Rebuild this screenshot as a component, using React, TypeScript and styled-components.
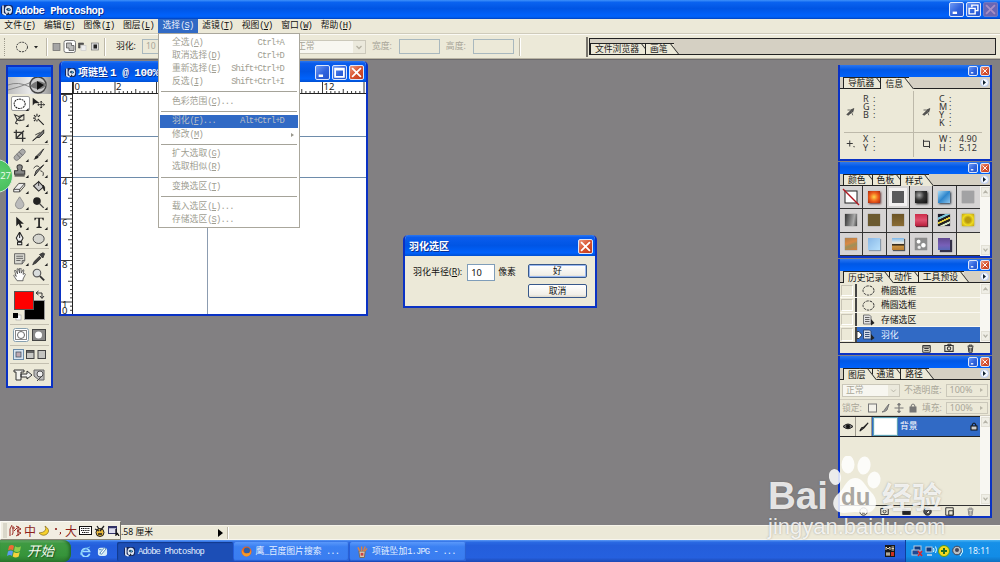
import React from 'react';
import styled, { createGlobalStyle, css } from 'styled-components';

const CJK = '"Noto Sans CJK SC"';
const beige = '#ece9d8';
const royal = '#0a32c4';

const Global = createGlobalStyle`
  *, *::before, *::after { box-sizing: border-box; }
  html, body { margin: 0; padding: 0; }
  body { overflow: hidden; }
  svg { display: block; flex: none; }
`;

/* ---------- text ---------- */

const Line = styled.span<{ $size?: number; $bold?: boolean; $color?: string }>`
  font-family: ${CJK}, sans-serif;
  font-size: ${p => p.$size ?? 8.8}px;
  font-weight: ${p => (p.$bold ? 700 : 400)};
  color: ${p => p.$color ?? 'inherit'};
  line-height: 1;
  white-space: pre;
`;
const Mono = styled.span<{ $open?: boolean }>`
  font-family: 'Liberation Mono', monospace;
  font-size: ${p => (p.$open ? 0.9 : 1)}em;
  letter-spacing: ${p => (p.$open ? -0.045 : -0.1)}em;
`;
const Tahoma = styled.span`
  font-family: 'Noto Sans', sans-serif;
  font-size: 0.98em;
`;

type LabelProps = { text: string; size?: number; bold?: boolean; color?: string; sans?: boolean };

/* Full-width runs use the CJK face, Latin runs a half-width one; "&X" underlines X. */
function Label({ text, size, bold, color, sans }: LabelProps) {
  const runs = text.match(/[\x20-\x7e]+|[^\x20-\x7e]+/g) ?? [];
  return (
    <Line $size={size} $bold={bold} $color={color}>
      {runs.map((run, i) => {
        if (!/^[\x20-\x7e]/.test(run)) return run;
        const parts = run.split(/(&[A-Z])/).map((s, j) => (s[0] === '&' ? <u key={j}>{s[1]}</u> : s));
        return sans ? <Tahoma key={i}>{parts}</Tahoma> : <Mono key={i} $open={bold}>{parts}</Mono>;
      })}
    </Line>
  );
}

/* ---------- shell ---------- */

const Screen = styled.div`
  position: relative;
  width: 1000px;
  height: 562px;
  display: flex;
  flex-direction: column;
  overflow: hidden;
  background: #828082;
  color: #111;
  font-family: 'Noto Sans', ${CJK}, sans-serif;
`;

const AppTitle = styled.header`
  height: 19px;
  flex: none;
  display: flex;
  align-items: center;
  padding: 0 2px 0 1px;
  gap: 2px;
  color: #fff;
  background: linear-gradient(#3f92fa 0, #0a63f0 12%, #0055e4 45%, #0061fb 80%, #0060f5 90%, #0040bd 100%);
  text-shadow: 1px 1px 0 #0a2f90;
`;
const Spacer = styled.div`
  flex: 1;
`;

const CaptionBtn = styled.span<{ $s: number; $kind?: 'close' | 'dim' }>`
  width: ${p => p.$s}px;
  height: ${p => p.$s}px;
  flex: none;
  display: flex;
  align-items: center;
  justify-content: center;
  border: 1px solid ${p => (p.$kind === 'dim' ? '#6a7ac8' : '#dbe6fb')};
  border-radius: 2px;
  background: ${p =>
    p.$kind === 'close'
      ? 'linear-gradient(135deg,#eb9a80,#d9532f 50%,#c03a1c)'
      : p.$kind === 'dim'
        ? '#6a66b4'
        : 'linear-gradient(135deg,#6f9af4,#2f62dc 55%,#2555cd)'};
`;

function Caption({ s, glyph, kind }: { s: number; glyph: 'min' | 'max' | 'restore' | 'x'; kind?: 'close' | 'dim' }) {
  const c = kind === 'dim' ? '#a890c4' : '#fff';
  return (
    <CaptionBtn $s={s} $kind={kind}>
      <svg width={s - 4} height={s - 4} viewBox="0 0 10 10" fill="none" stroke={c} strokeWidth="1.6">
        {glyph === 'min' && <path d="M1.5 8h4" strokeWidth="2.2" />}
        {glyph === 'max' && <path d="M1 1.5h8v7.5H1zM1 2.4h8" />}
        {glyph === 'restore' && <path d="M3.5 3V1h5.5v5H7M1 4h5.5v5H1z" strokeWidth="1.3" />}
        {glyph === 'x' && <path d="M1 1l8 8M9 1l-8 8" />}
      </svg>
    </CaptionBtn>
  );
}

function PsIcon({ s = 11 }: { s?: number }) {
  return (
    <svg width={s} height={s} viewBox="0 0 12 12">
      <rect x="0" y="1" width="12" height="10" rx="3" fill="#12245c" />
      <path d="M2 1.5v8l3 1.5" stroke="#e8f0fa" strokeWidth="1.6" fill="none" />
      <ellipse cx="7.5" cy="6" rx="3.6" ry="4.2" fill="#dfe9f4" />
      <path d="M5 5.5q3-3 5 .5q-2 2.5-5-.5" fill="#153255" />
      <circle cx="8" cy="5.5" r="1" fill="#5db6dd" />
      <path d="M6 11l1-3 1.5 2" fill="#131a2c" />
    </svg>
  );
}

const MenuBar = styled.nav`
  height: 15px;
  flex: none;
  display: flex;
  background: ${beige};
  border-bottom: 1px solid #cfcbbb;
`;
const MenuTitle = styled.div<{ $open?: boolean }>`
  width: 39.55px;
  height: 14px;
  display: flex;
  align-items: center;
  justify-content: center;
  ${p => p.$open && css`background: #316ac5; color: #e9f0fb;`}
`;

const OptionsBar = styled.div`
  height: 25px;
  flex: none;
  display: flex;
  align-items: center;
  background: ${beige};
  border-top: 1px solid #fbfaf4;
  border-bottom: 1px solid #b9b4a4;
  color: #222;
`;
const Grip = styled.i`
  width: 2px;
  height: 18px;
  margin: 0 10px 0 4px;
  border-left: 1px dotted #9d9a8c;
`;
const VRule = styled.i<{ $h?: number }>`
  width: 2px;
  height: ${p => p.$h ?? 18}px;
  border-left: 1px solid #bdb8a8;
  border-right: 1px solid #fff;
`;
const Field = styled.span<{ $w: number; $h?: number; $border?: string; $bg?: string }>`
  width: ${p => p.$w}px;
  height: ${p => p.$h ?? 15}px;
  flex: none;
  display: flex;
  align-items: center;
  padding-left: 3px;
  border: 1px solid ${p => p.$border ?? '#a9b8be'};
  background: ${p => p.$bg ?? beige};
`;
const OptGroup = styled.div<{ $l?: number; $gap?: number }>`
  display: flex;
  align-items: center;
  margin-left: ${p => p.$l ?? 0}px;
  gap: ${p => p.$gap ?? 0}px;
`;
const PaletteWell = styled.div`
  width: 407px;
  height: 17px;
  display: flex;
  align-items: flex-end;
  border: 1px solid #222;
  background: #d5d0c3;
  margin-right: 4px;
`;
const WellEdge = styled.i`
  width: 2px;
  height: 20px;
  background: #77746c;
  margin-right: 1px;
`;

/* ---------- tabs ---------- */

const TabStrip = styled.div`
  display: flex;
  align-items: flex-end;
  height: 12px;
  flex: none;
  padding-left: 3px;
  background: #d5d0c3;
  border-bottom: 1px solid #222;
`;
const TabBox = styled.div<{ $active?: boolean }>`
  position: relative;
  height: 11px;
  display: flex;
  align-items: center;
  padding: 1px 6px 0 4px;
  border-left: 1px solid #222;
  border-top: 1px solid #222;
  background: ${beige};
  z-index: ${p => (p.$active ? 3 : 1)};
  ${p => p.$active && css`margin-bottom: -1px; height: 12px;`}
  &::after {
    content: '';
    position: absolute;
    right: -5px;
    top: -1px;
    bottom: 0;
    width: 8px;
    background: ${beige};
    border-top: 1px solid #222;
    border-right: 1px solid #222;
    transform: skewX(38deg);
    transform-origin: bottom;
  }
  & > span {
    position: relative;
    z-index: 2;
  }
`;
const PanelMenu = styled.span`
  width: 9px;
  height: 9px;
  margin: 0 1px 1px 0;
  border-radius: 50%;
  background: #f3f7ff;
  border: 1px solid #b7c8ee;
  display: flex;
  align-items: center;
  justify-content: center;
`;
function Tabs({ names, active }: { names: string[]; active: number }) {
  return (
    <TabStrip>
      {names.map((n, i) => (
        <TabBox key={n} $active={i === active}>
          <Label text={n} />
        </TabBox>
      ))}
      <Spacer />
      <PanelMenu>
        <svg width="3" height="5" viewBox="0 0 3 5"><path d="M0 0l3 2.5L0 5z" fill="#123" /></svg>
      </PanelMenu>
    </TabStrip>
  );
}

/* ---------- workspace ---------- */

const Workspace = styled.main`
  position: relative;
  flex: 1;
  border-top: 1px solid #6b696b;
  background: #828082;
`;

const Toolbox = styled.aside`
  position: absolute;
  left: 6px;
  top: 5px;
  width: 47px;
  height: 323px;
  display: flex;
  flex-direction: column;
  border: 2px solid ${royal};
  background: ${beige};
`;
const ToolTitle = styled.div`
  height: 10px;
  flex: none;
  background: linear-gradient(#1a6bf2, #0058e8 50%, #0061fa);
`;
const ToolGroup = styled.div<{ $h: number }>`
  height: ${p => p.$h}px;
  flex: none;
  margin: 0 2px;
  padding: 2px 0 0 1px;
  display: grid;
  grid-template-columns: 19px 19px;
  grid-auto-rows: 16px;
  align-content: start;
  border-bottom: 1px solid #c3bfb0;
`;
const ToolRow = styled.div<{ $h: number; $gap?: number }>`
  height: ${p => p.$h}px;
  flex: none;
  margin: 0 2px;
  display: flex;
  align-items: center;
  justify-content: center;
  gap: ${p => p.$gap ?? 3}px;
  border-bottom: 1px solid #c3bfb0;
  &:last-child { border-bottom: 0; }
`;
const ToolCell = styled.div<{ $on?: boolean }>`
  display: flex;
  align-items: center;
  justify-content: center;
  ${p => p.$on && css`background: #fff; border: 1px solid #9a9a9a; border-radius: 2px; margin: 0 0 1px;`}
`;

const toolArt: Record<string, React.ReactNode> = {
  marquee: <ellipse cx="8" cy="8" rx="6.500" ry="5.500" fill="none" stroke="#222" strokeWidth="1.200" strokeDasharray="2.200 .8" />,
  move: <><path d="M1 1v9l2.500-2.500L9 7z" fill="#222" /><path d="M11 5v8M7 9h8M9.800 6.400L11 5l1.200 1.400M9.800 11.600L11 13l1.200-1.400M8.300 7.800L7 9l1.300 1.200M13.700 7.800L15 9l-1.300 1.200" stroke="#222" fill="none" /></>,
  lasso: <path d="M3 12l2-4-3-6 5 2 6-2v6L8 9 4 8M3 12l3 1M7 4l2 5M13 2l-8 6" stroke="#333" fill="none" strokeWidth="1.200" />,
  wand: <path d="M7 7l7 7M6 1v3M1.500 6h3M2.500 2.500l2 2M9.500 2.500l-2 2M2.500 9.500l2-2M6 8v2" stroke="#222" strokeWidth="1.300" fill="none" />,
  crop: <path d="M4 1v10h11M1 4h10.500v11M4 11L13 2" stroke="#333" strokeWidth="1.600" fill="none" />,
  slice: <path d="M1 14l8-8 5-5v4l-5 5-3 0zM4 7l6-3" stroke="#222" fill="#777" strokeWidth="1" />,
  heal: <g transform="rotate(-45 8 8)"><rect x="0" y="5" width="16" height="6" rx="3" fill="#aaa" stroke="#777" /><path d="M6 5v6M10 5v6" stroke="#666" /></g>,
  brush: <><path d="M14 1L7 8l2 1z" stroke="#222" fill="#999" /><path d="M1 14q2 0 3-4 3-3 4 0 0 3-7 4" fill="#222" /></>,
  stamp: <path d="M6 7q-3-6 2-6t2 6l1 1h3v4H2V8h3zM2 14h12" stroke="#333" fill="#888" strokeWidth="1.200" />,
  history: <><path d="M14 1L8 8l-5 6 2-6z" stroke="#222" fill="#888" /><path d="M2 5q4-5 7-1M10 8q5 1 3 6" stroke="#222" fill="none" /></>,
  eraser: <path d="M1 11l6-7h7l-6 7zM1 11v3h7v-3M8 14l6-7V4" stroke="#333" fill="#eee" />,
  bucket: <><path d="M2 7l6-5 6 6-6 5z" fill="#ccc" stroke="#222" strokeWidth="1.200" /><path d="M8 1v6M13 6q3 2 2 7l-2-4z" stroke="#222" fill="#222" /></>,
  drop: <path d="M8 1q5 7 5 9a5 5 0 0 1-10 0q0-2 5-9" fill="#bbb" stroke="#888" />,
  dodge: <><circle cx="6" cy="6" r="4.500" fill="#222" /><path d="M9 9l5 5" stroke="#444" strokeWidth="1.600" /></>,
  select: <path d="M4 1v11l3-3 2 5 2-1-2-4h4z" fill="#222" />,
  type: <path d="M3 2h11v3h-1l-1-2H9.500v9.500l2 .5v1h-6v-1l2-.5V3H5L4 5H3z" fill="#222" />,
  pen: <path d="M8 0l4 7-2 4H6L4 7zM8 1v6M5.500 12h5v3h-5z" stroke="#222" fill="#eee" strokeWidth="1.200" />,
  ellipse: <ellipse cx="8" cy="8" rx="6.500" ry="5.500" fill="#d5d5cf" stroke="#333" />,
  note: <path d="M2 2h12v8l-3 4H2zM11 14v-4h3M4 5h8M4 7.500h8M4 10h5" fill="#d9d9d2" stroke="#555" />,
  dropper: <path d="M1 15l2-4 6-6 2 2-6 6zM9 3l4 4 2-5-2-1z" fill="#444" stroke="#333" />,
  hand: <path d="M5 15l-4-6 1-1 2 2-2-7h1.500L5.500 7 5 1h1.500L8 6V0h1.500L10 6l2-4 1 .5-1 5 2-1 .8 1L12 13v2z" fill="#fff" stroke="#444" strokeWidth=".9" />,
  zoom: <><circle cx="6" cy="6" r="4.500" fill="#d8dcdc" stroke="#555" strokeWidth="1.300" /><path d="M9.500 9.500l5 5" stroke="#333" strokeWidth="2.200" /></>,
};
function Tool({ name, on, flyout = true }: { name: string; on?: boolean; flyout?: boolean }) {
  return (
    <ToolCell $on={on}>
      <svg width="17" height="14" viewBox="-1 0 20 16.500">
        {toolArt[name]}
        {flyout && <path d="M18.500 13v3.500H15z" fill="#222" />}
      </svg>
    </ToolCell>
  );
}

const DocWindow = styled.section`
  position: absolute;
  left: 59px;
  top: 1px;
  width: 309px;
  height: 255px;
  display: flex;
  flex-direction: column;
  border: 2px solid ${royal};
  border-top: 0;
  border-radius: 5px 5px 0 0;
  overflow: hidden;
  background: #fff;
`;
const WinTitle = styled.div<{ $h: number }>`
  height: ${p => p.$h}px;
  flex: none;
  display: flex;
  align-items: center;
  gap: 2px;
  padding: 1px 2px 0 4px;
  color: #fff;
  text-shadow: 1px 1px 0 #0a2f90;
  background: linear-gradient(#2a76f0 0, #0a5cec 12%, #0055e5 50%, #0062fc 85%, #004fd0 100%);
`;
const DocBody = styled.div`
  flex: 1;
  display: grid;
  grid-template-columns: 12px 1fr;
  grid-template-rows: 12px 1fr;
`;
const RulerCorner = styled.div`
  border-right: 1px solid #222;
  border-bottom: 1px solid #222;
`;
const DocCanvas = styled.div`
  background:
    linear-gradient(#6e8cab, #6e8cab) 0 42px / 100% 1px no-repeat,
    linear-gradient(#6e8cab, #6e8cab) 0 83px / 100% 1px no-repeat,
    linear-gradient(#8c9cb0, #8c9cb0) 134px 0 / 1px 100% no-repeat, #fff;
`;

const UNIT = 20.75;
function HRuler() {
  return (
    <svg width="293" height="12" fontFamily="Noto Sans" fontSize="9.500" fill="#222">
      {Array.from({ length: 72 }, (_, i) => {
        const x = (i * UNIT) / 5;
        return <path key={i} d={`M${x + 0.5} 12V${i % 10 === 0 ? 0 : i % 5 === 0 ? 7 : 9}`} stroke="#222" strokeWidth=".9" />;
      })}
      {[0, 2, 12].map(n => <text key={n} x={n * UNIT + 1.5} y="7.500">{n}</text>)}
      <path d="M0 11.500h293" stroke="#222" />
    </svg>
  );
}
function VRuler() {
  return (
    <svg width="12" height="220" fontFamily="Noto Sans" fontSize="9.500" fill="#222">
      {Array.from({ length: 54 }, (_, i) => {
        const y = (i * UNIT) / 5;
        return <path key={i} d={`M12 ${y + 0.5}H${i % 10 === 0 ? 0 : i % 5 === 0 ? 7 : 9}`} stroke="#222" strokeWidth=".9" />;
      })}
      {[0, 2, 4, 6, 8].map(n => <text key={n} x="1" y={n * UNIT + 7.5}>{n}</text>)}
      <text x="1" y="213.500">1</text>
      <text x="1" y="220">0</text>
      <path d="M11.500 0v220" stroke="#222" />
    </svg>
  );
}

/* ---------- drop-down ---------- */

const Dropdown = styled.div`
  position: absolute;
  left: 158px;
  top: 33px;
  width: 142px;
  height: 195px;
  z-index: 20;
  padding: 2px 1px;
  border: 1px solid #aaa79c;
  background: #fff;
  color: #a09e92;
`;
const MenuItem = styled.div<{ $hot?: boolean }>`
  height: 13.15px;
  display: flex;
  align-items: center;
  justify-content: space-between;
  padding: 0 14px 0 12px;
  ${p => p.$hot && css`background: #316ac5; color: #b9bfc6;`}
`;
const MenuRule = styled.div`
  height: 1px;
  margin: 2.8px 1px 2.75px;
  background: #a5a399;
`;
const SubArrow = styled.span`
  margin-right: -10px;
  border-left: 3px solid #99978c;
  border-top: 2.5px solid transparent;
  border-bottom: 2.5px solid transparent;
`;
const selectMenu: Array<[string, string?] | null> = [
  ['全选(&A)', 'Ctrl+A'],
  ['取消选择(&D)', 'Ctrl+D'],
  ['重新选择(&E)', 'Shift+Ctrl+D'],
  ['反选(&I)', 'Shift+Ctrl+I'],
  null,
  ['色彩范围(&C)...'],
  null,
  ['羽化(&F)...', 'Alt+Ctrl+D'],
  ['修改(&M)', '>'],
  null,
  ['扩大选取(&G)'],
  ['选取相似(&R)'],
  null,
  ['变换选区(&T)'],
  null,
  ['载入选区(&L)...'],
  ['存储选区(&S)...'],
];

/* ---------- dialog ---------- */

const Dialog = styled.section`
  position: absolute;
  left: 403px;
  top: 175px;
  width: 194px;
  height: 73px;
  display: flex;
  flex-direction: column;
  border: 2px solid ${royal};
  border-top: 0;
  border-radius: 5px 5px 0 0;
  overflow: hidden;
  background: ${beige};
`;
const DialogBody = styled.div`
  flex: 1;
  display: flex;
  align-items: flex-start;
  padding: 8px 8px 0;
`;
const DialogText = styled.div`
  height: 16px;
  display: flex;
  align-items: center;
`;
const ButtonCol = styled.div`
  display: flex;
  flex-direction: column;
  gap: 6px;
  margin-left: auto;
`;
const XpButton = styled.div<{ $default?: boolean }>`
  width: 59px;
  height: 14px;
  display: flex;
  align-items: center;
  justify-content: center;
  border: 1px solid #37588a;
  border-radius: 2px;
  background: linear-gradient(#fff, #f1efe8 80%, #dcd8cc);
  ${p => p.$default && css`box-shadow: inset 0 0 0 1px #9bb9f0;`}
`;

/* ---------- panels ---------- */

const PanelDock = styled.div`
  position: absolute;
  left: 838px;
  top: 5px;
  width: 154px;
  display: flex;
  flex-direction: column;
  gap: 1px;
`;
const Panel = styled.section<{ $h: number }>`
  height: ${p => p.$h}px;
  display: flex;
  flex-direction: column;
  border: 2px solid ${royal};
  border-top: 0;
  background: ${beige};
  overflow: hidden;
`;
const PanelTitle = styled.div`
  height: 12px;
  flex: none;
  display: flex;
  align-items: center;
  justify-content: flex-end;
  gap: 2px;
  background: linear-gradient(#2a76f0, #0058e6 40%, #0062fb);
`;
const InfoGrid = styled.div`
  flex: 1;
  display: grid;
  grid-template-columns: 70px 68px;
  grid-template-rows: 42px 24px;
  padding: 2px 0 0 4px;
`;
const InfoCell = styled.div<{ $right?: boolean; $top?: boolean }>`
  display: flex;
  align-items: center;
  gap: 8px;
  padding-left: ${p => (p.$right ? 8 : 2)}px;
  ${p => !p.$right && css`border-right: 1px solid #bdb9aa;`}
  ${p => (p.$top ? css`border-bottom: 1px solid #bdb9aa;` : css`padding-bottom: 3px;`)}
`;
const Channels = styled.div<{ $pad?: boolean }>`
  display: grid;
  grid-template-columns: 10px 10px auto;
  align-self: ${p => (p.$pad ? 'flex-start' : 'center')};
  padding-top: ${p => (p.$pad ? 4 : 0)}px;
  font: 9px/8.1px 'Noto Sans', sans-serif;
  color: #333;
`;
const StyleArea = styled.div`
  flex: 1;
  display: flex;
`;
const StyleGrid = styled.div`
  width: 140px;
  display: grid;
  grid-template-columns: repeat(6, 1fr);
  grid-template-rows: repeat(3, 1fr);
`;
const StyleCell = styled.div<{ $empty?: boolean }>`
  display: flex;
  align-items: center;
  justify-content: center;
  border-right: 1px solid #333;
  border-bottom: 1px solid #333;
  background: ${p => (p.$empty ? beige : '#d6d4d4')};
  &:nth-child(6n) { border-right: 0; }
`;
const Swatch = styled.i<{ $bg: string; $ring?: string }>`
  width: 12px;
  height: 12px;
  background: ${p => p.$bg};
  box-shadow: ${p => p.$ring ?? '0 0 1px #666'};
`;
const swatches: Array<[string, string?]> = [
  ['#fff'],
  ['radial-gradient(#ffd84a,#f0601c 50%,#a8260c)', '1px 1px 2px #633'],
  ['#5a5a5c', '0 0 0 3px #f2f0f0'],
  ['radial-gradient(circle at 35% 35%,#aaa,#333 45%,#111)', '1px 1px 2px #222'],
  ['linear-gradient(135deg,#a8dcf8,#2f86cc 50%,#8cc4ec)', '1px 1px 2px #234'],
  ['#a2a2a4'],
  ['linear-gradient(100deg,#333,#aaa 70%,#444)'],
  ['#6b5a30'],
  ['linear-gradient(#6b5426,#8a6c34)'],
  ['linear-gradient(#cc2c48,#e05070 50%,#b8203c)', '1px 1px 1px #623'],
  ['linear-gradient(155deg,#1a1a2c 18%,#7cc4d8 22% 32%,#222 36% 46%,#e8d040 48% 56%,#222 60% 70%,#d8e8c8 74% 82%,#223 86%)'],
  ['radial-gradient(#b89a10 30%,#f0dc20 60%,#c0a010)', '0 0 2px #a90'],
  ['linear-gradient(160deg,#b08048,#d88844 40%,#a09058 60%,#d87c3c)'],
  ['linear-gradient(135deg,#88b8e8,#b8e0fc)', '1px 1px 1px #89a'],
  ['linear-gradient(#7cb8ec,#f4f0e4 45%,#241c10 55%,#c89040 70%,#b87c30)', '1px 1px 1px #555'],
  ['radial-gradient(circle at 30% 30%,#fff 12%,transparent 20%),radial-gradient(circle at 70% 60%,#fff 15%,transparent 25%),radial-gradient(circle at 35% 78%,#eee 8%,transparent 18%),#8c8c8c'],
  ['linear-gradient(#604890,#7860b8 60%,#5868b8)', '2px 2px 1px #333048'],
];

const ScrollRail = styled.div`
  width: 10px;
  display: flex;
  flex-direction: column;
  justify-content: space-between;
  align-items: center;
  padding: 1px 0;
  background: #f8f7f2;
`;
const ScrollBtn = styled.span<{ $down?: boolean }>`
  width: 9px;
  height: 10px;
  display: flex;
  align-items: center;
  justify-content: center;
  background: #efeee6;
  border: 1px solid #e2e0d6;
  transform: ${p => (p.$down ? 'rotate(180deg)' : 'none')};
`;
function Scroller() {
  const chevron = <svg width="5" height="4" viewBox="0 0 5 4"><path d="M.5 3.300L2.500 1l2 2.300" stroke="#b5b3a8" fill="none" strokeWidth="1.200" /></svg>;
  return (
    <ScrollRail>
      <ScrollBtn>{chevron}</ScrollBtn>
      <ScrollBtn $down>{chevron}</ScrollBtn>
    </ScrollRail>
  );
}

const HistoryArea = styled.div`
  flex: 1;
  display: flex;
  min-height: 0;
`;
const HistoryList = styled.div`
  width: 140px;
  display: flex;
  flex-direction: column;
  justify-content: flex-end;
`;
const HistoryRow = styled.div<{ $on?: boolean }>`
  height: 14.6px;
  flex: none;
  display: flex;
  align-items: center;
  border-bottom: 1px solid #faf8f0;
  ${p => p.$on && css`border-bottom: 0; color: #e8f0ff;`}
`;
const HistoryMark = styled.span`
  width: 17px;
  height: 100%;
  padding: 1px 2px 1px 1px;
  border-right: 2px solid #444;
  background: ${beige};
  &::before {
    content: '';
    display: block;
    height: 100%;
    border: 1px solid #c9c5b6;
    border-right-color: #fff;
    border-bottom-color: #fff;
  }
`;
const HistoryBody = styled.span<{ $on?: boolean }>`
  flex: 1;
  height: 100%;
  display: flex;
  align-items: center;
  gap: 6px;
  padding-top: 1px;
  padding-left: ${p => (p.$on ? 0 : 5)}px;
  ${p => p.$on && css`background: #316ac5; gap: 0; & > span { margin-left: 6px; }`}
`;
const PanelFooter = styled.div`
  height: 11px;
  flex: none;
  display: flex;
  align-items: center;
  justify-content: flex-end;
  gap: 12.5px;
  border-top: 1px solid #333;
  padding-right: 15px;
`;
const Glyph = ({ d, s = 9, fill = 'none', c = '#333' }: { d: string; s?: number; fill?: string; c?: string }) => (
  <svg width={s} height={s} viewBox="0 0 12 12" fill={fill} stroke={c} strokeWidth="1.300"><path d={d} /></svg>
);
const TRASH = 'M2 3h8M4 3V1.500h4V3M3 4l.8 7h4.400L9 4M5 5v5M7 5v5';

function StateIcon({ on }: { on?: boolean }) {
  return (
    <svg width="13" height="12" viewBox="0 0 13 12">
      <path d="M1.500 1h6l1.500 1.500V10H1.500z" fill={on ? '#d5dcea' : '#e2e2e2'} stroke={on ? '#26416f' : '#666'} strokeWidth=".9" />
      <path d="M3 3.500h4.500M3 5.500h4.500M3 7.500h4.500" stroke={on ? '#26416f' : '#555'} strokeWidth=".9" />
      <path d="M9 5v6.500l3.500-2.500z" fill="#222" />
    </svg>
  );
}

const LayerOpts = styled.div<{ $h: number }>`
  height: ${p => p.$h}px;
  flex: none;
  display: flex;
  align-items: center;
  gap: 4px;
  padding: 1px 2px 0;
  color: #a9a698;
  border-bottom: 1px solid #d0ccbe;
`;
const LayerRow = styled.div`
  height: 21px;
  display: flex;
  align-items: stretch;
  border-top: 1px solid #222;
  border-bottom: 1px solid #222;
`;
const LayerFlag = styled.span`
  width: 16px;
  display: flex;
  align-items: center;
  justify-content: center;
  border-right: 1px solid #9d998c;
`;
const LayerName = styled.div`
  flex: 1;
  display: flex;
  align-items: center;
  gap: 2px;
  padding-right: 2px;
  background: #316ac5;
  color: #fff;
`;
const Thumb = styled.i`
  width: 25px;
  height: 19px;
  background: #fff;
  border: 1px solid #5da0b4;
  outline: 1px solid #e5f2f5;
  outline-offset: -2px;
  margin-left: 1px;
`;
const LayerArea = styled.div`
  flex: 1;
  display: flex;
`;
const LayerList = styled.div`
  width: 140px;
`;
const FieldArrow = styled.i`
  margin: 0 4px 0 auto;
  border-left: 3px solid #b9b6a8;
  border-top: 2.5px solid transparent;
  border-bottom: 2.5px solid transparent;
`;

/* ---------- status + taskbar ---------- */

const StatusBar = styled.footer`
  height: 15px;
  flex: none;
  display: flex;
  align-items: center;
  padding-left: 121px;
  background: ${beige};
  border-top: 1px solid #f7f4ea;
  border-bottom: 1px solid #f7f5ee;
`;
const ImeBar = styled.div`
  position: absolute;
  left: 0;
  top: 521px;
  width: 121px;
  height: 19px;
  z-index: 5;
  display: flex;
  align-items: center;
  gap: 2px;
  padding-left: 2px;
  background: #f1eee2;
  border: 1px solid #fbfaf5;
  border-right: 1px solid #77746c;
  border-bottom-color: #8a8678;
`;
const ImeMark = styled.span`
  font: 12px/1 ${CJK}, sans-serif;
  color: #8d1f1a;
`;
const TaskBar = styled.div`
  height: 22px;
  flex: none;
  display: flex;
  align-items: stretch;
  background: linear-gradient(#5c9bf6 0, #2a69e2 10%, #245edb 25%, #2560df 80%, #1c48b4 100%);
`;
const StartButton = styled.div`
  width: 71px;
  display: flex;
  align-items: center;
  gap: 5px;
  padding-left: 7px;
  border-radius: 0 8px 8px 0;
  background: linear-gradient(#74b878 0, #3f9a42 15%, #36943a 70%, #2b7a2e 100%);
  box-shadow: inset -2px 0 3px #256a2a;
`;
const StartText = styled.span`
  font: italic 400 13.5px/1 ${CJK}, sans-serif;
  color: #f3fbef;
  text-shadow: 1px 1px 1px #1b4f20;
`;
const QuickLaunch = styled.div`
  width: 46px;
  display: flex;
  align-items: center;
  gap: 6px;
  padding-left: 9px;
`;
const TaskButton = styled.div<{ $pressed?: boolean }>`
  width: 115.5px;
  margin: 2px 1px 1px 0;
  display: flex;
  align-items: center;
  gap: ${p => (p.$pressed ? 3 : 4)}px;
  padding-left: 7px;
  border-radius: 2px;
  color: #e6f0ff;
  background: ${p => (p.$pressed ? '#1c4eb6' : 'linear-gradient(#5a98fa,#3b80f2 25%,#3a7df0)')};
  box-shadow: ${p => (p.$pressed ? 'inset 1px 1px 1px #123a8c' : 'inset -1px -1px 1px #2a5fd0')};
`;
const TrayExtra = styled.div`
  margin-left: auto;
  width: 20px;
  display: flex;
  align-items: center;
`;
const Tray = styled.div`
  width: 95px;
  display: flex;
  align-items: center;
  gap: 1.5px;
  padding-left: 5px;
  color: #e8f5ff;
  border-left: 1px solid #0d3f9c;
  background: linear-gradient(#4cb4f4 0, #1690e8 12%, #128ce6 75%, #0f70c0 100%);
`;
const Clock = styled.span`
  display: flex;
  margin-left: 3px;
`;

const Badge = styled.div`
  position: absolute;
  left: -21px;
  top: 159px;
  width: 34px;
  height: 34px;
  z-index: 10;
  display: flex;
  align-items: center;
  justify-content: flex-end;
  padding-right: 1px;
  border: 1px solid #d2e8d4;
  border-radius: 50%;
  color: #eafbea;
  font: 9.5px/1 'Noto Sans', sans-serif;
  background: radial-gradient(circle at 60% 45%, #5cd070, #3fb553);
`;

const Watermark = styled.div`
  position: absolute;
  left: 768px;
  top: 456px;
  z-index: 30;
  display: flex;
  flex-direction: column;
  color: rgba(255, 255, 255, 0.84);
  text-shadow: 0 0 2px rgba(90, 90, 90, 0.5);
`;
const MarkRow = styled.div`
  height: 58px;
  display: flex;
  align-items: flex-end;
`;
const MarkBai = styled.span`
  width: 61px;
  font: bold 38.5px/36px 'Liberation Sans', sans-serif;
`;
const MarkPaw = styled.span`
  position: relative;
  width: 53px;
  height: 58px;
`;
const MarkDu = styled.span`
  position: absolute;
  left: 12px;
  top: 27px;
  font: bold 24px/28px 'Liberation Sans', sans-serif;
  color: #aaa7a1;
  text-shadow: none;
`;
const MarkJingyan = styled.span`
  font: bold 30px/37px ${CJK}, sans-serif;
`;
const MarkUrl = styled.span`
  font: 22px/26px 'Liberation Sans', sans-serif;
`;

const titles = ['文件(&F)', '编辑(&E)', '图像(&I)', '图层(&L)', '选择(&S)', '滤镜(&T)', '视图(&V)', '窗口(&W)', '帮助(&H)'];

function PanelCaption() {
  return (
    <PanelTitle>
      <Caption s={10} glyph="min" />
      <Caption s={10} glyph="x" kind="close" />
    </PanelTitle>
  );
}

const dropperIcon = (
  <svg width="9" height="9" viewBox="0 0 12 12">
    <path d="M1 10l5-5 2 2-5 4zM6 4l3 3 1.500-5z" fill="#555" stroke="#333" strokeWidth=".8" />
    <path d="M2 4h4M8 8l1 3" stroke="#444" />
  </svg>
);

function PaletteWellTabs() {
  return (
    <PaletteWell>
      <TabBox><Label text="文件浏览器" /></TabBox>
      <TabBox><Label text="画笔" /></TabBox>
    </PaletteWell>
  );
}

export default function App() {
  return (
    <Screen>
      <Global />
      <AppTitle>
        <PsIcon s={12} />
        <Label text="Adobe Photoshop" size={11.8} bold />
        <Spacer />
        <Caption s={15} glyph="min" />
        <Caption s={15} glyph="restore" />
        <Caption s={15} glyph="x" kind="dim" />
      </AppTitle>

      <MenuBar>
        {titles.map(t => (
          <MenuTitle key={t} $open={t.startsWith('选择')}><Label text={t} /></MenuTitle>
        ))}
      </MenuBar>

      <OptionsBar>
        <Grip />
        <svg width="24" height="14" viewBox="0 0 24 14">
          <ellipse cx="6" cy="7" rx="5.500" ry="4.800" fill="none" stroke="#333" strokeDasharray="2 1" />
          <path d="M18 6h4l-2 2.500z" fill="#222" />
        </svg>
        <OptGroup $l={6}><VRule /></OptGroup>
        <OptGroup $l={2}>
          <svg width="50" height="14" viewBox="0 0 50 14">
            <rect x="3" y="3.500" width="7" height="7" fill="#a5a5a5" stroke="#666" strokeWidth=".7" />
            <rect x="14" y=".5" width="11.500" height="12" rx="2" fill="#fff" stroke="#777" />
            <path d="M16.500 3h5v2.500h2.500v5h-5V8h-2.500z" fill="#bbb" stroke="#555" strokeWidth=".8" />
            <path d="M28.500 3h5v1.500h-3.300V8h-1.700z" fill="#555" stroke="#444" strokeWidth=".6" />
            <rect x="31" y="5.500" width="5" height="5" fill="#eee" stroke="#ccc" strokeWidth=".7" />
            <rect x="41.500" y="3" width="7" height="7" fill="#ddd" stroke="#777" strokeWidth=".7" />
            <rect x="43.500" y="4.500" width="3.500" height="4" fill="#222" />
          </svg>
        </OptGroup>
        <OptGroup $l={4}><VRule /></OptGroup>
        <OptGroup $l={10} $gap={6}>
          <Label text="羽化:" sans />
          <Field $w={60}><Label text="10" sans color="#a9a698" /></Field>
        </OptGroup>
        <OptGroup $l={91}>
          <Field $w={73} $h={14} $bg="#f8f7f1" $border="#cbc8ba">
            <Label text="正常" color="#a9a698" />
            <Spacer />
            <svg width="12" height="12" viewBox="0 0 12 12"><rect width="12" height="12" fill="#ebe9dc" /><path d="M3.500 5l2.500 2.500L8.500 5" stroke="#b5b2a4" fill="none" strokeWidth="1.300" /></svg>
          </Field>
        </OptGroup>
        <OptGroup $l={6} $gap={7}>
          <Label text="宽度:" sans color="#a9a698" />
          <Field $w={41} />
        </OptGroup>
        <OptGroup $l={6} $gap={7}>
          <Label text="高度:" sans color="#a9a698" />
          <Field $w={41} />
        </OptGroup>
        <OptGroup $l={5}><VRule /></OptGroup>
        <Spacer />
        <WellEdge />
        <PaletteWellTabs />
      </OptionsBar>

      <Workspace>
        <DocWindow>
          <WinTitle $h={21}>
            <PsIcon s={11} />
            <Label text="项链坠" size={10} bold />
            <Label text="1 @ 100%" size={12.2} bold />
            <Spacer />
            <Caption s={15} glyph="min" />
            <Caption s={15} glyph="max" />
            <Caption s={15} glyph="x" kind="close" />
          </WinTitle>
          <DocBody>
            <RulerCorner />
            <HRuler />
            <VRuler />
            <DocCanvas />
          </DocBody>
        </DocWindow>

        <Toolbox>
          <ToolTitle />
          <svg width="43" height="17" viewBox="0 0 43 17">
            <defs><linearGradient id="feather" x1="0" x2="1"><stop offset="0" stopColor="#bbb" /><stop offset=".5" stopColor="#e9e9e9" /><stop offset="1" stopColor="#999" /></linearGradient></defs>
            <rect width="43" height="17" fill="url(#feather)" />
            <path d="M0 8q10-4 22 2M0 13q12-3 24-8" stroke="#888" fill="none" />
            <ellipse cx="30" cy="8" rx="8" ry="8" fill="#ccc" stroke="#444" strokeWidth="1.500" />
            <path d="M22 9q8-9 17-1-8 8-17 1" fill="#777" />
            <path d="M29 4l7 4-7 5z" fill="#111" />
          </svg>
          <ToolGroup $h={51}>
            <Tool name="marquee" on /><Tool name="move" flyout={false} />
            <Tool name="lasso" /><Tool name="wand" flyout={false} />
            <Tool name="crop" flyout={false} /><Tool name="slice" />
          </ToolGroup>
          <ToolGroup $h={68}>
            <Tool name="heal" /><Tool name="brush" />
            <Tool name="stamp" /><Tool name="history" />
            <Tool name="eraser" /><Tool name="bucket" />
            <Tool name="drop" /><Tool name="dodge" />
          </ToolGroup>
          <ToolGroup $h={36}>
            <Tool name="select" /><Tool name="type" />
            <Tool name="pen" /><Tool name="ellipse" />
          </ToolGroup>
          <ToolGroup $h={36}>
            <Tool name="note" /><Tool name="dropper" />
            <Tool name="hand" flyout={false} /><Tool name="zoom" flyout={false} />
          </ToolGroup>
          <ToolRow $h={40}>
            <svg width="36" height="34" viewBox="0 0 36 34">
              <rect x="12.500" y="12.500" width="20" height="19" fill="#000" stroke="#999" />
              <rect x="2.500" y="3.500" width="19" height="18" fill="#fe0000" stroke="#555" />
              <path d="M25 5h5v5M26.500 3L24 5l2.500 2M28 8l2 2.500L32 8" stroke="#333" fill="none" />
              <rect x="4" y="27" width="5" height="5" fill="#fff" stroke="#999" strokeWidth=".6" />
              <rect x="1" y="25" width="5" height="5" fill="#000" />
            </svg>
          </ToolRow>
          <ToolRow $h={21} $gap={2}>
            <svg width="16" height="14" viewBox="0 0 16 14"><rect x=".5" y=".5" width="15" height="13" rx="2" fill="#fff" stroke="#86a0b0" /><rect x="2.500" y="2.500" width="11" height="9" fill="none" stroke="#888" /><circle cx="8" cy="7" r="3.500" fill="#fff" stroke="#666" /></svg>
            <svg width="16" height="14" viewBox="0 0 16 14"><rect x="1.500" y="1.500" width="13" height="11" fill="#888" stroke="#444" /><circle cx="7.500" cy="7" r="3.500" fill="#fff" /></svg>
          </ToolRow>
          <ToolRow $h={18}>
            <svg width="34" height="11" viewBox="0 0 34 11">
              <rect x=".5" y=".5" width="10" height="10" fill="#d9e4f0" stroke="#688aa8" /><rect x="3" y="3" width="5" height="5" fill="#c0a8b0" stroke="#456" strokeWidth=".8" />
              <rect x="13.500" y="1.500" width="7.500" height="8" fill="#c8c8c4" stroke="#444" /><path d="M13.500 3h7.500" stroke="#444" strokeWidth="1.500" />
              <rect x="25" y="1.500" width="7.500" height="8" fill="#c4c4c0" stroke="#444" />
            </svg>
          </ToolRow>
          <ToolRow $h={22}>
            <svg width="34" height="14" viewBox="0 0 34 14">
              <path d="M1 2h10v2H8v8H3V4H1zM8 6h6V3l5 4-5 4V9H8z" fill="#f2f2ee" stroke="#333" />
              <path d="M21 2h10v10h-5l-5-4z" fill="#bbb" stroke="#666" /><circle cx="27" cy="6" r="3" fill="#eee" stroke="#555" /><path d="M24 13l6-6" stroke="#444" />
            </svg>
          </ToolRow>
        </Toolbox>

        <Dialog>
          <WinTitle $h={21}>
            <Label text="羽化选区" size={10} bold />
            <Spacer />
            <Caption s={15} glyph="x" kind="close" />
          </WinTitle>
          <DialogBody>
            <DialogText><Label text="羽化半径(&R):" sans size={9} /></DialogText>
            <OptGroup $l={5} $gap={3}>
              <Field $w={28} $h={17} $bg="#fff" $border="#7f9db9"><Label text="10" sans size={9.5} /></Field>
              <Label text="像素" />
            </OptGroup>
            <ButtonCol>
              <XpButton $default><Label text="好" /></XpButton>
              <XpButton><Label text="取消" /></XpButton>
            </ButtonCol>
          </DialogBody>
        </Dialog>

        <PanelDock>
          <Panel $h={96}>
            <PanelCaption />
            <Tabs names={['导航器', '信息']} active={1} />
            <InfoGrid>
              <InfoCell $top>
                {dropperIcon}
                <Channels $pad>{['R', 'G', 'B'].map(c => <React.Fragment key={c}><span>{c}</span><span>:</span><span /></React.Fragment>)}</Channels>
              </InfoCell>
              <InfoCell $top $right>
                {dropperIcon}
                <Channels $pad>{['C', 'M', 'Y', 'K'].map(c => <React.Fragment key={c}><span>{c}</span><span>:</span><span /></React.Fragment>)}</Channels>
              </InfoCell>
              <InfoCell>
                <Glyph s={9} d="M5 2v8M1 6h8M10 10h1v1" />
                <Channels><span>X</span><span>:</span><span /><span>Y</span><span>:</span><span /></Channels>
              </InfoCell>
              <InfoCell $right>
                <Glyph s={9} d="M2 3h8v7H2zM2 1v3M10 9v3" />
                <Channels><span>W</span><span>:</span><span>4.90</span><span>H</span><span>:</span><span>5.12</span></Channels>
              </InfoCell>
            </InfoGrid>
          </Panel>

          <Panel $h={96}>
            <PanelCaption />
            <Tabs names={['颜色', '色板', '样式']} active={2} />
            <StyleArea>
              <StyleGrid>
                {swatches.map(([bg, ring], i) => (
                  <StyleCell key={i}>
                    {i === 0 ? (
                      <svg width="18" height="18" viewBox="0 0 18 18"><rect x="3" y="3" width="12" height="12" fill="#fff" stroke="#222" /><path d="M1 1l16 16" stroke="#b01820" strokeWidth="1.500" /></svg>
                    ) : (
                      <Swatch $bg={bg} $ring={ring} />
                    )}
                  </StyleCell>
                ))}
                <StyleCell $empty />
              </StyleGrid>
              <Scroller />
            </StyleArea>
          </Panel>

          <Panel $h={96}>
            <PanelCaption />
            <Tabs names={['历史记录', '动作', '工具预设']} active={0} />
            <HistoryArea>
              <HistoryList>
                {['椭圆选框', '椭圆选框', '存储选区', '羽化'].map((n, i) => (
                  <HistoryRow key={i} $on={i === 3}>
                    <HistoryMark />
                    <HistoryBody $on={i === 3}>
                      {i === 3 && <svg width="5" height="8" viewBox="0 0 5 8"><path d="M0 .5h2L5 4 2 7.500H0z" fill="#fff" stroke="#222" strokeWidth=".8" /></svg>}
                      {i < 2 ? (
                        <svg width="13" height="11" viewBox="0 0 13 11"><ellipse cx="6.500" cy="5.500" rx="5.500" ry="4.600" fill="none" stroke="#333" strokeDasharray="2.500 1" /></svg>
                      ) : (
                        <StateIcon on={i === 3} />
                      )}
                      <Label text={n} />
                    </HistoryBody>
                  </HistoryRow>
                ))}
              </HistoryList>
              <Scroller />
            </HistoryArea>
            <PanelFooter>
              <Glyph d="M1 2h10v9H1zM1 4h10M3 6h6M3 8.500h6" />
              <Glyph s={10} d="M1 3h10v7H1zM4 3l1-1.500h3L9 3M6 4.500a2 2 0 1 0 .1 0" />
              <Glyph d={TRASH} />
            </PanelFooter>
          </Panel>

          <Panel $h={162}>
            <PanelCaption />
            <Tabs names={['图层', '通道', '路径']} active={0} />
            <LayerOpts $h={20}>
              <Field $w={58} $h={13} $bg="#f7f6f0" $border="#cbc8ba">
                <Label text="正常" />
                <Spacer />
                <svg width="11" height="11" viewBox="0 0 12 12"><rect width="12" height="12" fill="#ebe9dc" /><path d="M3.500 5l2.500 2.500L8.500 5" stroke="#b5b2a4" fill="none" /></svg>
              </Field>
              <Label text="不透明度:" sans />
              <Field $w={42} $h={13} $border="#cbc8ba"><Label text="100%" sans size={9.2} /><FieldArrow /></Field>
            </LayerOpts>
            <LayerOpts $h={16}>
              <Label text="锁定:" sans />
              <svg width="52" height="10" viewBox="2 0 52 10" stroke="#777" fill="none">
                <rect x="4.500" y="1" width="8" height="8" fill="#f4f2ea" />
                <path d="M18 9q3-1 3-3l4-5-2 6q-2 2-5 2" fill="#999" />
                <path d="M35 .5v9M30.500 5h9M33.500 2L35 .5 36.500 2M33.500 8L35 9.500 36.500 8" strokeWidth="1.200" />
                <rect x="46" y="4" width="6" height="5" fill="#777" /><path d="M47 4q0-3 2-3t2 3" />
              </svg>
              <Label text="填充:" sans />
              <Field $w={42} $h={12} $border="#cbc8ba"><Label text="100%" sans size={9.2} /><FieldArrow /></Field>
            </LayerOpts>
            <LayerArea>
              <LayerList>
                <LayerRow>
                  <LayerFlag><svg width="10" height="7" viewBox="0 0 10 7"><path d="M0 3.500Q5-1.500 10 3.500 5 8 0 3.500" fill="#777" stroke="#222" /><circle cx="5" cy="3.500" r="2" fill="#111" /></svg></LayerFlag>
                  <LayerFlag><Glyph s={10} d="M11 1L6 7 1 11l2-4 3-1z" fill="#555" c="#222" /></LayerFlag>
                  <LayerName>
                    <Thumb />
                    <Label text="背景" />
                    <Spacer />
                    <svg width="8" height="9" viewBox="0 0 8 9"><rect x="1" y="4" width="6" height="4" fill="#ccc" stroke="#111" /><path d="M2 4q0-3 2-3t2 3" fill="none" stroke="#111" /></svg>
                  </LayerName>
                </LayerRow>
              </LayerList>
              <Scroller />
            </LayerArea>
            <PanelFooter>
              <Glyph d="M6 1a5 5 0 1 0 .1 0M4 8h4" />
              <Glyph d="M1 2h10v8H1zM6 4a2 2 0 1 0 .1 0" />
              <Glyph d="M1 3h4l1 1h5v6H1z" fill="#222" />
              <Glyph d="M6 1a5 5 0 1 0 .1 0M3 9l6-6v6z" fill="#555" />
              <Glyph d="M1 1h10v10H1zM5 5h6v6H5z" />
              <Glyph d={TRASH} c="#888" />
            </PanelFooter>
          </Panel>
        </PanelDock>
      </Workspace>

      <StatusBar>
        <Label text=".58 厘米" sans />
        <OptGroup $l={65} $gap={4}>
          <svg width="5" height="8" viewBox="0 0 5 8"><path d="M0 0l5 4-5 4z" fill="#000" /></svg>
          <VRule $h={12} />
        </OptGroup>
      </StatusBar>

      <TaskBar>
        <StartButton>
          <svg width="15" height="14" viewBox="0 0 15 14">
            <path d="M2 2q3-2 5 0L6 6.500q-2-2-5 0z" fill="#ee6a35" /><path d="M8 2.300q3 2 6 0L13 7q-3 2-6 0z" fill="#8fd04a" />
            <path d="M1 7.500q3-2 5 0L5 12q-2-2-5 0z" fill="#5b9bef" /><path d="M6.700 8q3 2 6 0l-1 4.500q-3 2-6 0z" fill="#f6d23c" />
          </svg>
          <StartText>开始</StartText>
        </StartButton>
        <QuickLaunch>
          <svg width="11" height="11" viewBox="0 0 12 12"><path d="M10.500 8.500A4.500 4.500 0 1 1 10.500 6H3" fill="none" stroke="#9fdcff" strokeWidth="1.800" /><path d="M0 10Q1 4 11 1" stroke="#6ec0f0" fill="none" /></svg>
          <svg width="11" height="11" viewBox="0 0 12 12"><rect x="1" y="2" width="10" height="9" rx="3" fill="#d7ecf8" /><path d="M3 8l5-6 2 1-5 6zM2 4h3" stroke="#4f88b8" fill="#fff" /></svg>
        </QuickLaunch>
        <TaskButton $pressed><PsIcon /><Label text="Adobe Photoshop" /></TaskButton>
        <TaskButton>
          <svg width="11" height="11" viewBox="0 0 12 12"><circle cx="6" cy="6" r="5.500" fill="#e8641c" /><circle cx="6.500" cy="5" r="3.300" fill="#2c5fa8" /><path d="M1 3q1 6 6 5 3 0 4-3 0 6-5 6.500Q0 11 1 3" fill="#f49a28" /></svg>
          <Label text="鹰_百度图片搜索 ..." />
        </TaskButton>
        <TaskButton>
          <svg width="11" height="12" viewBox="0 0 12 12"><path d="M2 5h7l-1 7H3z" fill="#d8c8b0" stroke="#765" /><path d="M3 5L1 1M5 5V0M7 5l2-5M8.500 5L11 2" stroke="#e08040" strokeWidth="1.500" /><path d="M4 7h3v3H4z" fill="#c44" /></svg>
          <Label text="项链坠加1.JPG - ..." />
        </TaskButton>
        <TrayExtra>
          <svg width="10" height="12" viewBox="0 0 10 12"><rect width="10" height="12" fill="#191718" /><path d="M1 5V2l2 2 2-2v3M6.500 2H9M6.500 3.500H9M6.500 5H9M2 7v4M4 7v4M1 9h4" stroke="#f0e8d0" fill="none" strokeWidth=".9" /><rect x="6" y="7" width="3" height="4" fill="#c32" /></svg>
        </TrayExtra>
        <Tray>
          <svg width="12" height="12" viewBox="0 0 12 12"><rect x="3" y="1" width="7" height="5" fill="#123a7a" stroke="#bcd" /><rect x="1" y="5" width="7" height="5" fill="#1d4a94" stroke="#bcd" /><path d="M7 6l4 5M11 6l-4 5" stroke="#d8262c" strokeWidth="1.600" /></svg>
          <svg width="12" height="12" viewBox="0 0 12 12"><rect x="1" y="2" width="6" height="5" fill="#123a7a" stroke="#bcd" /><path d="M2 10h5" stroke="#cde" strokeWidth="1.500" /><path d="M8.500 3q1 2 0 4M10.500 1.500q2 3 0 6.500" stroke="#dff" fill="none" /></svg>
          <svg width="12" height="12" viewBox="0 0 12 12"><circle cx="6" cy="6" r="5.500" fill="#f4d81c" stroke="#4a9a28" /><path d="M6 3v6M3 6h6" stroke="#1f6f26" strokeWidth="2" /></svg>
          <svg width="12" height="12" viewBox="0 0 12 12"><circle cx="5" cy="5.500" r="4.300" fill="#b8bfc4" stroke="#445" /><circle cx="5" cy="5" r="2" fill="#445" /><path d="M10 3q2 4-2 8" stroke="#dff" fill="none" /></svg>
          <Clock><Label text="18:11" sans /></Clock>
        </Tray>
      </TaskBar>

      <ImeBar>
        <svg width="4" height="15" viewBox="0 0 4 15"><path d="M1 0v15M3 0v15" stroke="#b8b4a6" strokeWidth=".8" /></svg>
        <svg width="13" height="12" viewBox="0 0 13 12" fill="none" stroke="#9a2a22"><path d="M3 0L1 4v7M3 3h3M4 1v7l-1 2M7 1l5 3-4 2 4 2-5 3M5 6l3-3M9 1v10" /></svg>
        <ImeMark>中</ImeMark>
        <svg width="12" height="12" viewBox="0 0 12 12"><path d="M7 1q3 6-6 7 4 4 8 1 4-4-2-8" fill="#f6d22c" stroke="#8a6a14" strokeWidth=".7" /></svg>
        <svg width="11" height="12" viewBox="0 0 11 12"><circle cx="4" cy="4" r="1.100" fill="#8d1f1a" /><path d="M8 7l.8 1L7.800 9.500" stroke="#8d1f1a" fill="none" /></svg>
        <ImeMark>大</ImeMark>
        <svg width="13" height="9" viewBox="0 0 13 9"><rect x=".5" y=".5" width="12" height="8" fill="#fff" stroke="#111" /><path d="M2 2.500h9M2 4.500h9M3 6.500h7" stroke="#111" strokeDasharray="1.200 .6" strokeWidth="1.100" /></svg>
        <svg width="12" height="12" viewBox="0 0 12 12"><circle cx="6" cy="7.500" r="4" fill="#e8b83c" stroke="#222" /><path d="M1 4l4 2M10 1L6 6M3 1l2 3M4 9h4" stroke="#222" strokeWidth="1.300" /></svg>
        <svg width="12" height="11" viewBox="0 0 12 11"><rect x=".5" y="1.500" width="8" height="7" fill="#dde" stroke="#336" /><path d="M.5 2.500h8" stroke="#336" strokeWidth="1.500" /><path d="M8 4v6l1.500-1.500L11 11" stroke="#111" fill="none" strokeWidth="1.300" /></svg>
      </ImeBar>

      <Dropdown>
        {selectMenu.map((it, i) =>
          it ? (
            <MenuItem key={i} $hot={it[0].startsWith('羽化')}>
              <Label text={it[0]} />
              {it[1] === '>' ? <SubArrow /> : it[1] && <Label text={it[1]} />}
            </MenuItem>
          ) : (
            <MenuRule key={i} />
          ),
        )}
      </Dropdown>

      <Badge>27</Badge>

      <Watermark>
        <MarkRow>
          <MarkBai>Bai</MarkBai>
          <MarkPaw>
            <svg width="53" height="58" viewBox="0 0 53 58" fill="#fff" fillOpacity=".84">
              <ellipse cx="6" cy="21" rx="6" ry="8" transform="rotate(-12 6 21)" />
              <ellipse cx="19" cy="8.500" rx="6.500" ry="9" />
              <ellipse cx="35" cy="9.500" rx="6.500" ry="9" transform="rotate(8 35 9.500)" />
              <ellipse cx="45" cy="24" rx="6.500" ry="8.500" transform="rotate(10 45 24)" />
              <path d="M26 22c8 0 10 8 16 14 6 6 7 13 2 18-5 5-11 2-18 2s-14 3-19-2c-5-6-3-12 3-17 6-6 8-15 16-15z" />
            </svg>
            <MarkDu>du</MarkDu>
          </MarkPaw>
          <MarkJingyan>经验</MarkJingyan>
        </MarkRow>
        <MarkUrl>jingyan.baidu.com</MarkUrl>
      </Watermark>
    </Screen>
  );
}
